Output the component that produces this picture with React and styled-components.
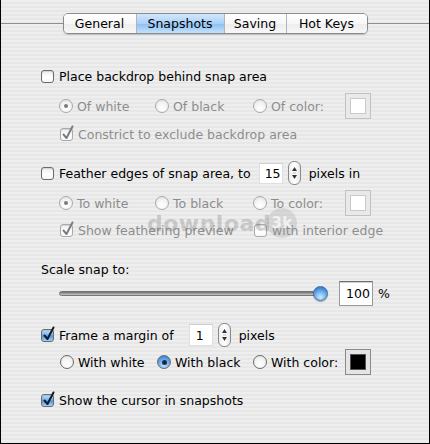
import React from "react";
import styled, { createGlobalStyle } from "styled-components";

const GlobalStyle = createGlobalStyle`
  html, body { margin: 0; padding: 0; }
  body { width: 430px; height: 444px; overflow: hidden; background: #ececec; }
`;

const Window = styled.div`
  position: relative;
  width: 430px;
  height: 444px;
  box-sizing: border-box;
  border: 1px solid #000;
  border-top: none;
  padding-top: 13px;
  background: repeating-linear-gradient(to bottom, #eeeeee 0 2px, #e7e7e7 2px 4px);
  font-family: "DejaVu Sans", "Noto Sans", sans-serif;
  font-size: 12.5px;
  color: #000;
  overflow: hidden;
`;

const TabBar = styled.div`
  display: flex;
  align-items: center;
  height: 21px;
`;

const TabLine = styled.div`
  flex: 1;
  height: 1px;
  background: #8f8f8f;
`;

const Segments = styled.div`
  display: flex;
  height: 21px;
  box-sizing: border-box;
  border: 1px solid #8a8a8a;
  border-radius: 5px;
  overflow: hidden;
  box-shadow: 0 1px 1px rgba(0, 0, 0, 0.18);
`;

const Tab = styled.div`
  width: ${p => p.$w}px;
  display: flex;
  align-items: center;
  justify-content: center;
  box-sizing: border-box;
  font-size: 12.5px;
  border-left: ${p => (p.$first ? "none" : "1px solid #b4b4b4")};
  background: ${p =>
    p.$active
      ? "linear-gradient(#d3e8fc, #a9d0f7 50%, #8cc0f3 52%, #c3e2fb)"
      : "linear-gradient(#ffffff, #f7f7f7 50%, #ededed 52%, #f7f7f7)"};
`;

const Body = styled.div`
  padding-left: 40px;
  display: flex;
  flex-direction: column;
`;

const Row = styled.div`
  display: flex;
  align-items: center;
  height: 24px;
  margin-top: ${p => p.$mt || 0}px;
  padding-left: ${p => p.$indent || 0}px;
`;

const OptionGrid = styled.div`
  display: grid;
  grid-template-columns: ${p => p.$cols};
  align-items: center;
  height: 24px;
  margin-top: ${p => p.$mt || 0}px;
  padding-left: ${p => p.$indent || 0}px;
`;

const Item = styled.div`
  display: flex;
  align-items: center;
`;

const Label = styled.span`
  color: ${p => (p.$disabled ? "#8d8d8d" : "#000")};
  margin-left: ${p => p.$ml ?? 0}px;
  margin-right: ${p => p.$mr ?? 0}px;
  white-space: nowrap;
`;

const CheckBox = styled.span`
  position: relative;
  flex: none;
  width: 13px;
  height: 13px;
  box-sizing: border-box;
  border: 1px solid ${p => (p.$disabled ? "#a9a9a9" : "#6b6b6b")};
  border-radius: 3px;
  background: ${p =>
    p.$checked && !p.$disabled
      ? "linear-gradient(#c6e0f9, #75aeea 48%, #4f93e2 52%, #a3d2f8)"
      : "linear-gradient(#eeeeee, #ffffff 60%, #f6f6f6)"};
  box-shadow: inset 0 1px 1px rgba(0, 0, 0, 0.12);
`;

const CheckMark = styled.svg`
  position: absolute;
  left: 0px;
  top: -4px;
  width: 14px;
  height: 16px;
  overflow: visible;
`;

const RadioCircle = styled.span`
  position: relative;
  flex: none;
  width: 14px;
  height: 14px;
  box-sizing: border-box;
  border-radius: 50%;
  border: 1px solid ${p => (p.$disabled ? "#a9a9a9" : "#6b6b6b")};
  background: ${p =>
    p.$on && !p.$disabled
      ? "radial-gradient(circle at 50% 75%, #c8e6fd 0, #75b0ec 45%, #3e86dc 80%)"
      : "radial-gradient(circle at 50% 70%, #ffffff 0, #f4f4f4 50%, #dcdcdc 100%)"};
  display: flex;
  align-items: center;
  justify-content: center;
`;

const RadioDot = styled.span`
  width: ${p => (p.$disabled ? 4 : 5)}px;
  height: ${p => (p.$disabled ? 4 : 5)}px;
  border-radius: 50%;
  background: ${p => (p.$disabled ? "#7a7a7a" : "#1a2a44")};
`;

const Field = styled.div`
  width: ${p => p.$w}px;
  height: ${p => p.$h}px;
  box-sizing: border-box;
  background: #fff;
  border: 1px solid ${p => (p.$soft ? "#dedede" : "#9a9a9a")};
  border-top-color: ${p => (p.$soft ? "#cfcfcf" : "#6f6f6f")};
  box-shadow: ${p => (p.$soft ? "none" : "inset 0 1px 0 #d0d0d0")};
  display: flex;
  align-items: center;
  padding-left: ${p => p.$pl}px;
  margin-left: ${p => p.$ml || 0}px;
`;

const Stepper = styled.div`
  width: 13px;
  height: 24px;
  box-sizing: border-box;
  border: 1px solid #8a8a8a;
  border-radius: 6px;
  background: linear-gradient(to right, #ededed, #ffffff 50%, #e9e9e9);
  margin-left: ${p => p.$ml}px;
  margin-right: ${p => p.$mr}px;
  display: flex;
  align-items: center;
  justify-content: center;
`;

const Well = styled.div`
  width: 26px;
  height: 26px;
  box-sizing: border-box;
  border: 1px solid ${p => (p.$disabled ? "#c2c2c2" : "#8a8a8a")};
  background: ${p => (p.$disabled ? "#e9e9e9" : "#e4e4e4")};
  display: flex;
  align-items: center;
  justify-content: center;
`;

const WellSwatch = styled.div`
  width: 16px;
  height: 16px;
  box-sizing: border-box;
  background: ${p => p.$color};
  border: 1px solid ${p => (p.$disabled ? "#c9c9c9" : "#555")};
`;

const SliderBox = styled.div`
  position: relative;
  width: 270px;
  height: 18px;
  display: flex;
  align-items: center;
  margin-right: 10px;
`;

const Track = styled.div`
  flex: 1;
  height: 5px;
  margin-right: 8px;
  border-radius: 3px;
  background: linear-gradient(#6a6a6a, #9c9c9c 50%, #c8c8c8);
  border: 1px solid #777;
  box-sizing: border-box;
`;

const Knob = styled.div`
  position: absolute;
  right: 1px;
  top: 2px;
  width: 15px;
  height: 15px;
  border-radius: 50%;
  box-sizing: border-box;
  border: 1px solid #3f6ea8;
  background: radial-gradient(circle at 50% 78%, #cde9ff 0, #7db8ef 40%, #3f86d8 75%, #2e6fc0 100%);
  box-shadow: 0 1px 1px rgba(0, 0, 0, 0.3);
`;

const Watermark = styled.div`
  position: absolute;
  left: 146px;
  top: 208px;
  display: flex;
  align-items: center;
  font-family: "DejaVu Sans", sans-serif;
  font-weight: bold;
  font-size: 22px;
  letter-spacing: 0.5px;
  color: rgba(110, 110, 110, 0.3);
  pointer-events: none;
`;

const WatermarkBadge = styled.span`
  width: 30px;
  height: 30px;
  border-radius: 50%;
  margin-left: -4px;
  background: rgba(150, 150, 150, 0.26);
  color: rgba(255, 255, 255, 0.7);
  font-size: 15px;
  display: flex;
  align-items: center;
  justify-content: center;
`;

function Check({ checked, disabled, label, labelDisabled }) {
  return (
    <Item>
      <CheckBox $checked={checked} $disabled={disabled}>
        {checked && (
          <CheckMark viewBox="0 0 14 16">
            <path
              d="M2.5 9.5 L5.5 13 L11.5 1.5"
              fill="none"
              stroke={disabled ? "#7c7c7c" : "#111a2c"}
              strokeWidth="2"
              strokeLinecap="round"
              strokeLinejoin="round"
            />
          </CheckMark>
        )}
      </CheckBox>
      <Label $disabled={labelDisabled ?? disabled} $ml={5}>{label}</Label>
    </Item>
  );
}

function Radio({ on, disabled, label }) {
  return (
    <Item>
      <RadioCircle $on={on} $disabled={disabled}>
        {on && <RadioDot $disabled={disabled} />}
      </RadioCircle>
      <Label $disabled={disabled} $ml={4}>{label}</Label>
    </Item>
  );
}

function StepArrows({ ml, mr }) {
  return (
    <Stepper $ml={ml} $mr={mr}>
      <svg width="7" height="18" viewBox="0 0 7 18">
        <path d="M3.5 3 L6 7 L1 7 Z" fill="#333" />
        <path d="M3.5 15 L6 11 L1 11 Z" fill="#333" />
        <rect x="2" y="8.5" width="3" height="1" fill="#bbb" />
      </svg>
    </Stepper>
  );
}

function ColorWell({ color, disabled }) {
  return (
    <Well $disabled={disabled}>
      <WellSwatch $color={color} $disabled={disabled} />
    </Well>
  );
}

const RADIO_COLS = "96px 98px 92px auto";

export default function App() {
  return (
    <>
      <GlobalStyle />
      <Window>
        <TabBar>
          <TabLine />
          <Segments>
            <Tab $w={72} $first>General</Tab>
            <Tab $w={88} $active>Snapshots</Tab>
            <Tab $w={62}>Saving</Tab>
            <Tab $w={81}>Hot Keys</Tab>
          </Segments>
          <TabLine />
        </TabBar>

        <Body>
          <Row $mt={30}>
            <Check label="Place backdrop behind snap area" />
          </Row>
          <OptionGrid $mt={5} $indent={18} $cols={RADIO_COLS}>
            <Radio on disabled label="Of white" />
            <Radio disabled label="Of black" />
            <Radio disabled label="Of color:" />
            <ColorWell color="#fff" disabled />
          </OptionGrid>
          <Row $mt={5} $indent={19}>
            <Check checked disabled label="Constrict to exclude backdrop area" />
          </Row>

          <Row $mt={15}>
            <Check label="Feather edges of snap area, to" />
            <Field $w={24} $h={21} $pl={5} $ml={8} $soft>15</Field>
            <StepArrows ml={5} mr={8} />
            <Label>pixels in</Label>
          </Row>
          <OptionGrid $mt={5} $indent={18} $cols={RADIO_COLS}>
            <Radio on disabled label="To white" />
            <Radio disabled label="To black" />
            <Radio disabled label="To color:" />
            <ColorWell color="#fff" disabled />
          </OptionGrid>
          <OptionGrid $mt={4} $indent={19} $cols="194px auto">
            <Check checked disabled label="Show feathering preview" />
            <Check disabled label="with interior edge" />
          </OptionGrid>

          <Row $mt={15}>
            <Label>Scale snap to:</Label>
          </Row>
          <Row $indent={18}>
            <SliderBox>
              <Track />
              <Knob />
            </SliderBox>
            <Field $w={34} $h={25} $pl={6}>100</Field>
            <Label $ml={5}>%</Label>
          </Row>

          <Row $mt={18}>
            <Check checked label="Frame a margin of" />
            <Field $w={24} $h={22} $pl={6} $ml={15} $soft>1</Field>
            <StepArrows ml={5} mr={8} />
            <Label>pixels</Label>
          </Row>
          <OptionGrid $mt={2} $indent={19} $cols="97px 96px 92px auto">
            <Radio label="With white" />
            <Radio on label="With black" />
            <Radio label="With color:" />
            <ColorWell color="#000" />
          </OptionGrid>

          <Row $mt={15}>
            <Check checked label="Show the cursor in snapshots" />
          </Row>
        </Body>

        <Watermark>
          download
          <WatermarkBadge>3k</WatermarkBadge>
        </Watermark>
      </Window>
    </>
  );
}
